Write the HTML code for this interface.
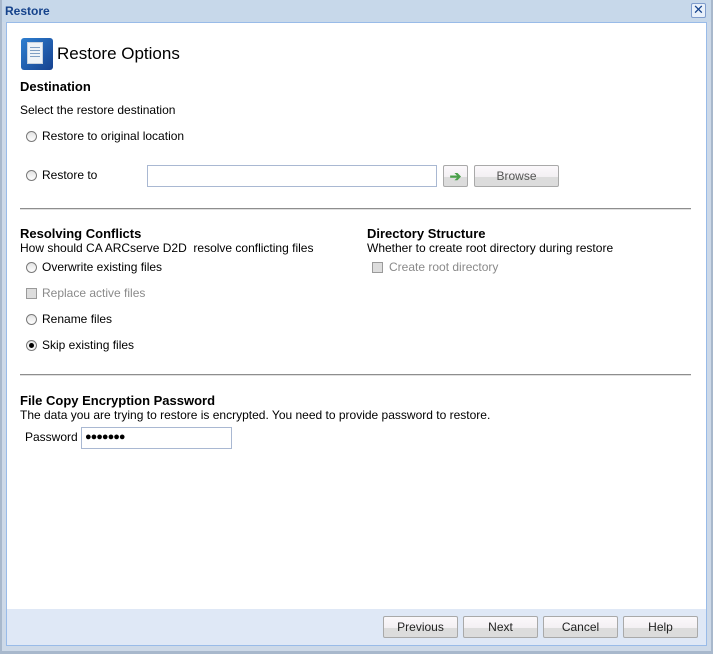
<!DOCTYPE html>
<html><head><meta charset="utf-8"><style>
*{margin:0;padding:0;box-sizing:border-box}
body{width:713px;height:654px;background:#cdd9e8;font-family:"Liberation Sans",sans-serif;font-size:12px;color:#000;position:relative;overflow:hidden}
.a{position:absolute;white-space:nowrap}
.b{font-weight:bold;font-size:13px}
.g{color:#8a8a8a}
.radio{position:absolute;width:11px;height:11px;border:1px solid #7a7a7a;border-radius:50%;background:linear-gradient(#e4e4e4,#fff)}
.chk{position:absolute;width:11px;height:11px;border:1px solid #9a9a9a;background:#ddd}
.btn{position:absolute;height:22px;border:1px solid #a9a9a9;border-radius:2px;background:linear-gradient(#fbf8fb 0,#f3f0f3 55%,#dcdcdc 56%,#dcdcdc 100%);text-align:center;line-height:20px;font-size:12px;color:#222}
.hr{position:absolute;left:20px;width:671px;height:2px;background:#8e8e8e;border-bottom:1px solid #e0e0e0}
.inp{position:absolute;height:22px;border:1px solid #a9b8d2;background:#fff}
</style></head><body>
<div class="a" style="left:0;top:0;width:713px;height:22px;background:#c7d8ea"></div>
<div class="a b" style="left:5px;top:4px;color:#15428b;font-size:12px">Restore</div>
<div class="a" style="left:691px;top:3px;width:15px;height:15px;border:1px solid #7f9ccc;border-radius:2px;background:#e8f0fa;color:#15428b;font-size:13px;line-height:12px;text-align:center">✕</div>
<div class="a" style="left:6px;top:22px;width:701px;height:624px;border:1px solid #99bbe8;background:#fff"></div>
<div class="a" style="left:7px;top:609px;width:699px;height:36px;background:#dfe8f6"></div>
<div class="a" style="left:0;top:0;width:2px;height:654px;background:#a8b8cc"></div>
<div class="a" style="left:0;top:651px;width:713px;height:3px;background:#a8b8cc"></div>
<div class="a" style="left:711px;top:0;width:2px;height:654px;background:#a8b8cc"></div>

<div class="a" style="left:21px;top:38px;width:32px;height:32px;border-radius:3px;background:linear-gradient(135deg,#2e7fd0,#16418f)"></div>
<div class="a" style="left:27px;top:42px;width:16px;height:22px;background:#eef3f8;border:1px solid #c8d2de"></div>
<div class="a" style="left:30px;top:47px;width:10px;height:12px;background:repeating-linear-gradient(#7f9fc4 0 1px,transparent 1px 3px)"></div>
<div class="a" style="left:57px;top:44px;font-size:17px">Restore Options</div>

<div class="a b" style="left:20px;top:79px">Destination</div>
<div class="a" style="left:20px;top:103px">Select the restore destination</div>
<div class="radio" style="left:26px;top:131px"></div>
<div class="a" style="left:42px;top:129px">Restore to original location</div>
<div class="radio" style="left:26px;top:170px"></div>
<div class="a" style="left:42px;top:168px">Restore to</div>
<div class="inp" style="left:147px;top:165px;width:290px"></div>
<div class="btn" style="left:443px;top:165px;width:25px;color:#4aa04a;font-weight:bold;font-size:14px">➔</div>
<div class="btn" style="left:474px;top:165px;width:85px;color:#555">Browse</div>
<div class="hr" style="top:208px"></div>

<div class="a b" style="left:20px;top:226px">Resolving Conflicts</div>
<div class="a" style="left:20px;top:241px">How should CA ARCserve D2D&nbsp; resolve conflicting files</div>
<div class="radio" style="left:26px;top:262px"></div>
<div class="a" style="left:42px;top:260px">Overwrite existing files</div>
<div class="chk" style="left:26px;top:288px"></div>
<div class="a g" style="left:42px;top:286px">Replace active files</div>
<div class="radio" style="left:26px;top:314px"></div>
<div class="a" style="left:42px;top:312px">Rename files</div>
<div class="radio" style="left:26px;top:340px"></div>
<div class="a" style="left:29px;top:343px;width:5px;height:5px;border-radius:50%;background:#000"></div>
<div class="a" style="left:42px;top:338px">Skip existing files</div>

<div class="a b" style="left:367px;top:226px">Directory Structure</div>
<div class="a" style="left:367px;top:241px">Whether to create root directory during restore</div>
<div class="chk" style="left:372px;top:262px"></div>
<div class="a g" style="left:389px;top:260px">Create root directory</div>
<div class="hr" style="top:374px"></div>

<div class="a b" style="left:20px;top:393px">File Copy Encryption Password</div>
<div class="a" style="left:20px;top:408px">The data you are trying to restore is encrypted. You need to provide password to restore.</div>
<div class="a" style="left:25px;top:430px">Password</div>
<div class="inp" style="left:81px;top:427px;width:151px;font-size:11px;line-height:19px;padding-left:3px;letter-spacing:-1px">●●●●●●●</div>

<div class="btn" style="left:383px;top:616px;width:75px">Previous</div>
<div class="btn" style="left:463px;top:616px;width:75px">Next</div>
<div class="btn" style="left:543px;top:616px;width:75px">Cancel</div>
<div class="btn" style="left:623px;top:616px;width:75px">Help</div>
</body></html>
